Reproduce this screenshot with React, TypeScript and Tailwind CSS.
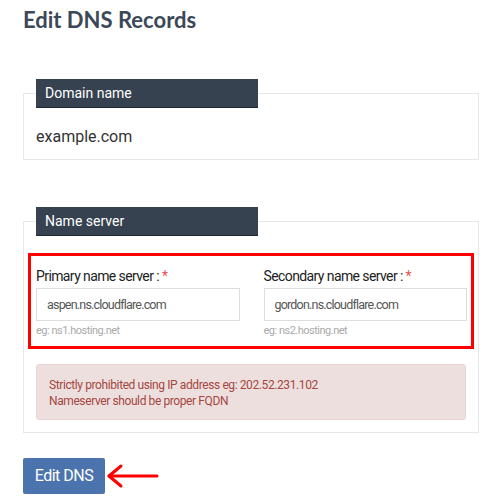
import React from "react"

// Small field column: label, input, hint
function NsField({ label, value, hint }: { label: string; value: string; hint: string }) {
  return (
    <div className="flex flex-col">
      <label className="text-[14px] leading-[20px] tracking-[-0.6px] text-[#222] mb-[2px]">
        {label} <span className="text-[#e5534b]">*</span>
      </label>
      <input
        readOnly
        value={value}
        className="h-[33px] w-full border border-[#ddd] bg-white px-[10px] text-[12.5px] tracking-[-0.8px] text-[#555] outline-none"
        style={{ fontFamily: "Roboto, sans-serif" }}
      />
      <span className="mt-[3px] text-[11px] leading-[14px] tracking-[-0.5px] text-[#aaa]">{hint}</span>
    </div>
  )
}

export default function App() {
  return (
    <div className="min-h-[500px] w-[497px] bg-white px-[23px] pt-[5px] font-['Roboto',sans-serif]">
      <h1 className="text-[22px] leading-[30px] font-bold text-[#3b4858] font-['Lato',sans-serif]">
        Edit DNS Records
      </h1>

      {/* Domain name box */}
      <div className="mt-[58px] w-[456px] border border-[#e6e8eb] px-[12px] pb-[10px]">
        <div className="-mt-[15px] flex h-[28px] w-[222px] items-center bg-[#36424f] px-[9px] text-[14px] text-white shadow-[0_1px_0_#1f2730]">
          Domain name
        </div>
        <div className="mt-[18px] text-[16px] leading-[24px] text-[#333]">example.com</div>
      </div>

      {/* Name server box */}
      <div className="mt-[61px] w-[456px] border border-[#e6e8eb] px-[12px] pb-[12px]">
        <div className="-mt-[15px] flex h-[28px] w-[222px] items-center bg-[#36424f] px-[9px] text-[14px] text-white shadow-[0_1px_0_#1f2730]">
          Name server
        </div>

        <div className="-mx-[8px] mt-[18px] border-[3px] border-[#f00] pl-[5px] pr-[4px] pt-[10px] pb-[8px]">
          <div className="grid grid-cols-2 gap-[24px]">
            <NsField label="Primary name server :" value="aspen.ns.cloudflare.com" hint="eg: ns1.hosting.net" />
            <NsField label="Secondary name server :" value="gordon.ns.cloudflare.com" hint="eg: ns2.hosting.net" />
          </div>
        </div>

        <div className="mt-[15px] h-[56px] rounded-[3px] border border-[#ebd3d3] bg-[#eedfdf] px-[12px] pt-[12px] text-[12px] leading-[16px] tracking-[-0.4px] text-[#a4473f]">
          <div>Strictly prohibited using IP address eg: 202.52.231.102</div>
          <div>Nameserver should be proper FQDN</div>
        </div>
      </div>

      {/* Submit */}
      <div className="mt-[25px] flex items-center">
        <button className="h-[36px] w-[82px] rounded-[2px] bg-[#4b74ae] text-[16px] tracking-[-0.5px] text-white">Edit DNS</button>
        <svg width="54" height="26" viewBox="0 0 54 26" className="ml-[1px]">
          <path d="M3 13 H51" stroke="#f00" strokeWidth="3" strokeLinecap="round" fill="none" />
          <path d="M15 3 L3 13 L15 23" stroke="#f00" strokeWidth="3" strokeLinecap="round" strokeLinejoin="round" fill="none" />
        </svg>
      </div>
    </div>
  )
}
